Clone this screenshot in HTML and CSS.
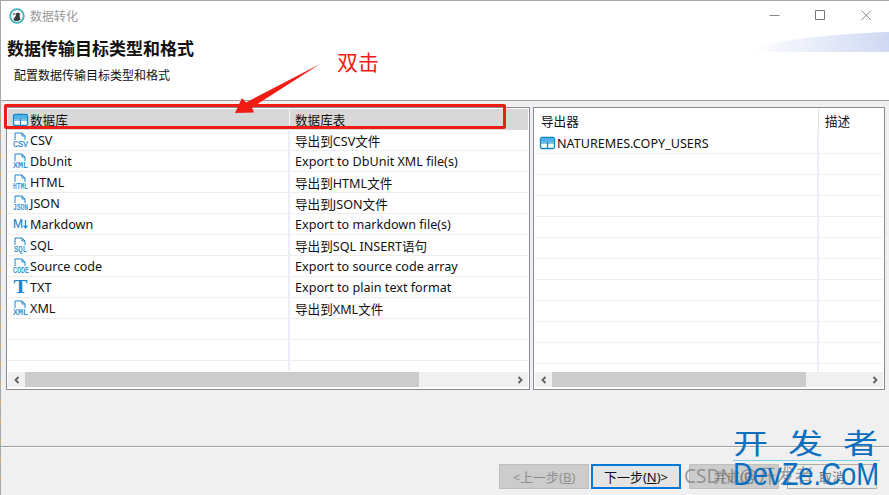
FILE: index.html
```html
<!DOCTYPE html>
<html lang="zh-CN">
<head>
  <meta charset="UTF-8" />
  <title>数据转化</title>
  <link rel="stylesheet" href="styles.css">
</head>
<body>
  <div class="window">
    <div class="titlebar">
      <svg class="app-icon" viewBox="0 0 16 16">
        <circle cx="8" cy="8" r="6.800" fill="#f6f8f8" stroke="#3fb3bd" stroke-width="1.800"/>
        <path d="M4.500 12c.5-2 1.500-3.500 2.500-4l-.5-2 2-1.500 2.500 1-.5 2.500 1 3.500-2.500 1.500h-2.500z" fill="#33383c"/>
        <circle cx="5" cy="6" r="1.100" fill="#70787c"/>
      </svg>
      <span class="title-text">数据转化</span>
      <div class="win-controls">
        <svg viewBox="0 0 11 11"><path d="M.5 5.500h10" stroke="#8a8a8a" fill="none"/></svg>
        <svg viewBox="0 0 11 11"><path d="M.5.5h9v9h-9z" stroke="#777" fill="none"/></svg>
        <svg viewBox="0 0 11 11"><path d="M.5.5l9.500 9.500M10 .5L.5 10" stroke="#8a8a8a" fill="none"/></svg>
      </div>
    </div>

    <div class="banner">
      <svg class="banner-art" viewBox="0 0 140 20" preserveAspectRatio="none">
        <defs>
          <linearGradient id="swoosh" x1="0" x2="1" y1="0" y2="0">
            <stop offset="0" stop-color="#fff"/>
            <stop offset="1" stop-color="#cfd9f3"/>
          </linearGradient>
        </defs>
        <path d="M0 20C20 8 80 2 140 0v20z" fill="url(#swoosh)"/>
      </svg>
      <h1>数据传输目标类型和格式</h1>
      <p>配置数据传输目标类型和格式</p>
    </div>

    <div class="content">
      <div class="pane pane-left">
        <div class="row head">
          <div class="cell">
            <svg class="ico" viewBox="0 0 16 16"><use href="#table-ico"/></svg>数据库
          </div>
          <div class="cell">数据库表</div>
        </div>
        <div class="rows">
          <div class="row"><div class="cell"><svg class="ico" viewBox="0 0 16 16"><use href="#doc-ico"/><text x="7.500" y="15" textLength="15" lengthAdjust="spacingAndGlyphs">CSV</text></svg>CSV</div><div class="cell">导出到CSV文件</div></div>
          <div class="row"><div class="cell"><svg class="ico" viewBox="0 0 16 16"><use href="#doc-ico"/><text x="7.500" y="15" textLength="15" lengthAdjust="spacingAndGlyphs">XML</text></svg>DbUnit</div><div class="cell">Export to DbUnit XML file(s)</div></div>
          <div class="row"><div class="cell"><svg class="ico" viewBox="0 0 16 16"><use href="#doc-ico"/><text x="7.500" y="15" textLength="15" lengthAdjust="spacingAndGlyphs">HTML</text></svg>HTML</div><div class="cell">导出到HTML文件</div></div>
          <div class="row"><div class="cell"><svg class="ico" viewBox="0 0 16 16"><use href="#doc-ico"/><text x="7.500" y="15" textLength="15" lengthAdjust="spacingAndGlyphs">JSON</text></svg>JSON</div><div class="cell">导出到JSON文件</div></div>
          <div class="row"><div class="cell"><svg class="ico" viewBox="0 0 16 16"><text class="md" x="0" y="12" textLength="10" lengthAdjust="spacingAndGlyphs">M</text><path d="M12.500 4v8M10.500 9.500l2 2.500 2-2.500" stroke="#1a86d0" stroke-width="1.200" fill="none"/></svg>Markdown</div><div class="cell">Export to markdown file(s)</div></div>
          <div class="row"><div class="cell"><svg class="ico" viewBox="0 0 16 16"><use href="#doc-ico"/><text x="7.500" y="15" textLength="13" lengthAdjust="spacingAndGlyphs">SQL</text></svg>SQL</div><div class="cell">导出到SQL INSERT语句</div></div>
          <div class="row"><div class="cell"><svg class="ico" viewBox="0 0 16 16"><use href="#doc-ico"/><text x="8" y="15" textLength="16" lengthAdjust="spacingAndGlyphs">CODE</text></svg>Source code</div><div class="cell">Export to source code array</div></div>
          <div class="row"><div class="cell"><svg class="ico" viewBox="0 0 16 16"><text class="big-t" x="7.500" y="14" textLength="14" lengthAdjust="spacingAndGlyphs">T</text></svg>TXT</div><div class="cell">Export to plain text format</div></div>
          <div class="row"><div class="cell"><svg class="ico" viewBox="0 0 16 16"><use href="#doc-ico"/><text x="7.500" y="15" textLength="15" lengthAdjust="spacingAndGlyphs">XML</text></svg>XML</div><div class="cell">导出到XML文件</div></div>
          <div class="row"><div class="cell"></div><div class="cell"></div></div>
          <div class="row"><div class="cell"></div><div class="cell"></div></div>
          <div class="row"><div class="cell"></div><div class="cell"></div></div>
        </div>
        <div class="hscroll">
          <span class="arrow"><svg viewBox="0 0 8 8"><path d="M5.500 1L2.500 4l3 3" /></svg></span>
          <div class="track"><div class="thumb thumb-left"></div></div>
          <span class="arrow"><svg viewBox="0 0 8 8"><path d="M2.500 1l3 3-3 3" /></svg></span>
        </div>
      </div>

      <div class="pane pane-right">
        <div class="row head">
          <div class="cell">导出器</div>
          <div class="cell">描述</div>
        </div>
        <div class="rows">
          <div class="row"><div class="cell"><svg class="ico" viewBox="0 0 16 16"><use href="#table-ico"/></svg>NATUREMES.COPY_USERS</div><div class="cell"></div></div>
          <div class="row"><div class="cell"></div><div class="cell"></div></div>
          <div class="row"><div class="cell"></div><div class="cell"></div></div>
          <div class="row"><div class="cell"></div><div class="cell"></div></div>
          <div class="row"><div class="cell"></div><div class="cell"></div></div>
          <div class="row"><div class="cell"></div><div class="cell"></div></div>
          <div class="row"><div class="cell"></div><div class="cell"></div></div>
          <div class="row"><div class="cell"></div><div class="cell"></div></div>
          <div class="row"><div class="cell"></div><div class="cell"></div></div>
          <div class="row"><div class="cell"></div><div class="cell"></div></div>
          <div class="row"><div class="cell"></div><div class="cell"></div></div>
          <div class="row"><div class="cell"></div><div class="cell"></div></div>
        </div>
        <div class="hscroll">
          <span class="arrow"><svg viewBox="0 0 8 8"><path d="M5.500 1L2.500 4l3 3" /></svg></span>
          <div class="track"><div class="thumb thumb-right"></div></div>
          <span class="arrow"><svg viewBox="0 0 8 8"><path d="M2.500 1l3 3-3 3" /></svg></span>
        </div>
      </div>
    </div>

    <div class="footer">
      <div class="nav-buttons">
        <button class="btn" disabled>&lt;上一步(<u>B</u>)</button>
        <button class="btn btn-default">下一步(<u>N</u>)&gt;</button>
      </div>
      <button class="btn" disabled>完成(<u>F</u>)</button>
      <button class="btn btn-cancel">取消</button>
    </div>
  </div>

  <!-- annotations pasted over the screenshot -->
  <div class="red-box"></div>
  <svg class="red-arrow" viewBox="0 0 100 60">
    <path d="M0 53L7 38l4 4.500L85 4 17 47.500l2 5z" fill="#f01c14"/>
  </svg>
  <span class="note">双击</span>

  <span class="csdn-mark">CSDN @开发者</span>
  <div class="site-mark">
    <div class="site-cn"><span>开</span><span>发</span><span>者</span></div>
    <span class="site-en">DevZe.CoM</span>
  </div>

  <svg class="defs" width="0" height="0">
    <defs>
      <g id="table-ico">
        <rect x=".5" y="2.500" width="14" height="11" rx="1.500" fill="#fff" stroke="#0f86c6" stroke-width="1.300"/>
        <rect x="1" y="3" width="13" height="4" fill="#4fb3e8"/>
        <path d="M.5 8h14M7.500 7v6.500" stroke="#0f86c6" stroke-width="1.200" fill="none"/>
      </g>
      <path id="doc-ico" d="M2 8V1h7l3 3v4M9 1v3h3" fill="none" stroke="#1a86d0"/>
    </defs>
  </svg>
</body>
</html>
```

FILE: styles.css
```css
* {
  box-sizing: border-box;
}
html, body {
  margin: 0;
  height: 100%;
  overflow: hidden;
}
body {
  position: relative;
  font-family: "Noto Sans", "Noto Sans CJK SC", sans-serif;
  font-size: 12.6px;
  color: #111;
  background: #f0f0f0;
}
.window {
  position: relative;
  display: flex;
  flex-direction: column;
  height: 495px;
  border-top: 1px solid #a3a6a8;
  border-left: 1px solid #a3a9b0;
  background: #f0f0f0;
}
/* the desktop peeking through down the left edge */
.window::before {
  content: "";
  position: absolute;
  left: -1px;
  top: 100px;
  bottom: 0;
  width: 1px;
  background: repeating-linear-gradient(#a3a9b0 0 14px, #c8ad70 14px 19px);
}

/* title bar */
.titlebar {
  display: flex;
  align-items: center;
  height: 29px;
  padding-left: 8px;
  background: #fff;
}
.app-icon {
  width: 16px;
  height: 16px;
  margin-right: 5px;
}
.title-text {
  font-size: 12px;
  color: #9a9a9a;
}
.win-controls {
  display: flex;
  gap: 35px;
  margin-left: auto;
  margin-right: 17px;
}
.win-controls svg {
  width: 11px;
  height: 11px;
}

/* banner */
.banner {
  position: relative;
  height: 71px;
  padding: 8px 0 0 6px;
  background: #fff;
  border-bottom: 1px solid #a0a0a0;
}
.banner h1 {
  margin: 0;
  font-size: 17px;
  line-height: 21px;
  font-weight: 700;
  color: #111;
}
.banner p {
  margin: 8px 0 0 7px;
  font-size: 12px;
  line-height: 18px;
}
.banner-art {
  position: absolute;
  right: 0;
  top: 2px;
  width: 140px;
  height: 20px;
}

/* tables */
.content {
  display: flex;
  gap: 3px;
  height: 345px;
  padding: 6px 0 0 5px;
}
.pane {
  display: flex;
  flex-direction: column;
  height: 283px;
  padding: 1px;
  background: #fff;
  border: 1px solid #8a8a94;
}
.pane-left {
  width: 524px;
}
.pane-right {
  width: 352px;
}
.row {
  display: grid;
  flex: none;
  height: 21px;
  border-bottom: 1px solid #eeeeee;
}
.pane-left .row {
  grid-template-columns: 282px 1fr;
}
.pane-right .row {
  grid-template-columns: 284px 1fr;
}
.cell {
  display: flex;
  align-items: center;
  padding-left: 5px;
  white-space: nowrap;
  overflow: hidden;
}
.cell:first-child {
  border-right: 2px solid #eaeefa;
}
.head {
  border-bottom: 0;
}
.pane-left .head {
  background: #d8d8d8;
}
.pane-left .head .cell:first-child {
  border-right: 1px solid #f4f4f4;
}
.pane-right .head {
  height: 24px;
}
.pane-right .head .cell {
  padding-bottom: 2px;
}
.pane-right .head .cell:first-child {
  padding-left: 6px;
  border-right: 1px solid #e4e4e4;
}
.pane-right .head .cell:last-child {
  padding-left: 6px;
}
.rows {
  flex: 1;
  overflow: hidden;
  margin-bottom: 1px;
}
.ico {
  flex: none;
  width: 16px;
  height: 16px;
  margin-right: 1px;
  overflow: visible;
}
.ico text {
  font-family: "Liberation Mono", monospace;
  font-size: 9.500px;
  font-weight: 400;
  fill: #1a86d0;
  stroke: #1a86d0;
  stroke-width: 0.200;
  text-anchor: middle;
}
.ico .md {
  font-family: "Liberation Sans", sans-serif;
  font-size: 12px;
  text-anchor: start;
}
.ico .big-t {
  font-family: "Liberation Serif", serif;
  font-size: 19px;
  font-weight: 700;
  stroke: none;
}

/* horizontal scrollbar */
.hscroll {
  display: flex;
  flex: none;
  height: 15px;
  margin-bottom: 1px;
  background: #f0f0f0;
}
.arrow {
  display: flex;
  flex: none;
  align-items: center;
  justify-content: center;
  width: 17px;
}
.arrow svg {
  width: 8px;
  height: 8px;
}
.arrow path {
  fill: none;
  stroke: #606060;
  stroke-width: 1.800;
}
.track {
  flex: 1;
}
.thumb {
  height: 100%;
  background: #cccccc;
}
.thumb-left {
  width: 394px;
}
.thumb-right {
  width: 254px;
}

/* wizard buttons */
.footer {
  display: flex;
  flex: 1;
  justify-content: flex-end;
  gap: 8px;
  padding: 17px 12px 0 0;
  border-top: 1px solid #a0a0a0;
  box-shadow: inset 0 1px 0 #fafafa;
}
.nav-buttons {
  display: flex;
  gap: 2px;
}
.btn {
  width: 90px;
  height: 25px;
  padding: 0;
  font: inherit;
  font-size: 13px;
  color: #111;
  background: #e4e4e4;
  border: 1px solid #adadad;
}
.btn[disabled] {
  color: #8f8f8f;
  background: #cccccc;
  border-color: #bfbfbf;
}
.btn-default {
  border: 2px solid #0078d7;
}
.btn-cancel {
  color: #777;
  background: #ececec;
}

/* overlays */
.red-box {
  position: absolute;
  left: 4px;
  top: 104px;
  width: 502px;
  height: 25px;
  border: 3px solid #f01c14;
  border-radius: 2px;
}
.red-arrow {
  position: absolute;
  left: 235px;
  top: 60px;
  width: 100px;
  height: 60px;
}
.note {
  position: absolute;
  left: 337px;
  top: 47px;
  font-size: 21px;
  line-height: 30px;
  color: #f01c14;
}
.csdn-mark {
  position: absolute;
  left: 684px;
  top: 463px;
  font-size: 19px;
  line-height: 26px;
  white-space: nowrap;
  color: rgba(110, 110, 110, 0.65);
}
.site-mark {
  position: absolute;
  left: 733px;
  top: 425px;
  width: 147px;
  color: #0b6fc0;
}
.site-cn {
  display: flex;
  justify-content: space-between;
  height: 36px;
  padding: 0 2px 0 0;
  font-size: 28px;
  line-height: 36px;
  border-bottom: 1px solid #7fd0f0;
}
.site-cn span {
  width: 35px;
  text-align: center;
  transform: scaleX(1.25);
}
.site-en {
  display: block;
  font-family: "Liberation Sans", sans-serif;
  font-size: 32px;
  line-height: 26px;
  white-space: nowrap;
  transform: scaleX(0.855);
  transform-origin: left center;
}
.defs {
  position: absolute;
}
```
